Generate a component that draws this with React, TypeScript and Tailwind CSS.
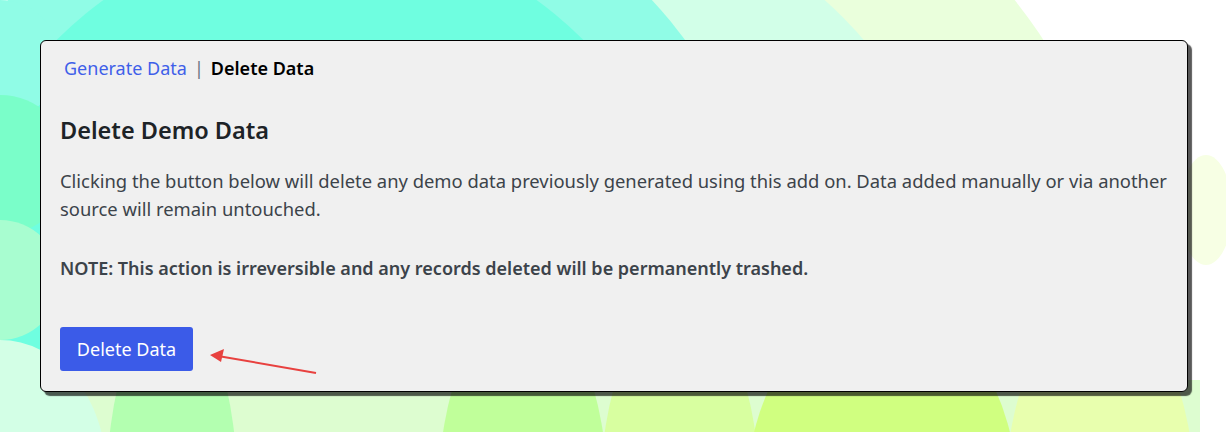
import React from "react";

const font = { fontFamily: '"Noto Sans", "Open Sans", sans-serif' };

// flat colour blobs behind the card
function Backdrop() {
  return (
    <svg className="absolute inset-0 h-full w-full" viewBox="0 0 1226 432" preserveAspectRatio="none">
      <rect width="1226" height="432" fill="#ffffff" />
      <ellipse cx="1206" cy="210" rx="26" ry="55" fill="#f7ffe4" />
      <circle cx="640" cy="300" r="480" fill="#eaffdc" />
      <circle cx="560" cy="300" r="400" fill="#d2ffe8" />
      <circle cx="330" cy="300" r="440" fill="#90fce6" />
      <circle cx="320" cy="300" r="370" fill="#6ffee0" />
      <ellipse cx="0" cy="60" rx="60" ry="60" fill="#90fce6" />
      <ellipse cx="0" cy="165" rx="70" ry="70" fill="#7afec9" />
      <ellipse cx="0" cy="280" rx="60" ry="60" fill="#a8fdd0" />
      <rect x="0" y="380" width="1200" height="52" fill="#ddfdd0" />
      <ellipse cx="1100" cy="500" rx="95" ry="200" fill="#e8ffae" />
      <ellipse cx="680" cy="500" rx="80" ry="200" fill="#d8ffa0" />
      <ellipse cx="882" cy="500" rx="136" ry="200" fill="#d0ff80" />
      <ellipse cx="523" cy="500" rx="85" ry="200" fill="#c0ff9a" />
      <ellipse cx="172" cy="500" rx="66" ry="200" fill="#b3ffb0" />
      <ellipse cx="0" cy="470" rx="106" ry="130" fill="#d3ffe6" />
    </svg>
  );
}

export default function App() {
  return (
    <div className="relative h-[432px] w-full overflow-hidden" style={font}>
      <Backdrop />
      <div className="relative pl-[40px] pt-[40px]">
        <div className="relative h-[352px] w-[1148px] rounded-[6px] border border-black bg-[#f0f0f0] pl-[19px] pr-[6px] pt-[13px] shadow-[4px_4px_1px_rgba(0,0,0,0.65)]">
          <nav className="flex items-center pl-[4px] text-[18px] leading-[28px]">
            <span className="text-[#3f5fe9]">Generate Data</span>
            <span className="mx-[7px] text-[#6b7280]">|</span>
            <span className="font-semibold text-black">Delete Data</span>
          </nav>
          <h2 className="mt-[33px] text-[23.5px] font-semibold leading-[30px] text-[#1d2327]">Delete Demo Data</h2>
          <p className="mt-[22px] text-[18.4px] leading-[28px] text-[#3c434a]">
            Clicking the button below will delete any demo data previously generated using this add on. Data added manually or via another source will remain untouched.
          </p>
          <p className="mt-[31px] text-[18px] font-semibold leading-[28px] text-[#3c434a]">
            NOTE: This action is irreversible and any records deleted will be permanently trashed.
          </p>
          <div className="mt-[45px] flex">
            <button className="h-[44px] w-[133px] rounded-[3px] bg-[#3b5be8] text-[18px] text-white">Delete Data</button>
          </div>
          <svg className="absolute left-[165px] top-[305px]" width="120" height="40" viewBox="0 0 120 40">
            <line x1="110" y1="27" x2="12" y2="10" stroke="#e8413f" strokeWidth="2" />
            <polygon points="4,9 18,3 15,16" fill="#e8413f" />
          </svg>
        </div>
      </div>
    </div>
  );
}
